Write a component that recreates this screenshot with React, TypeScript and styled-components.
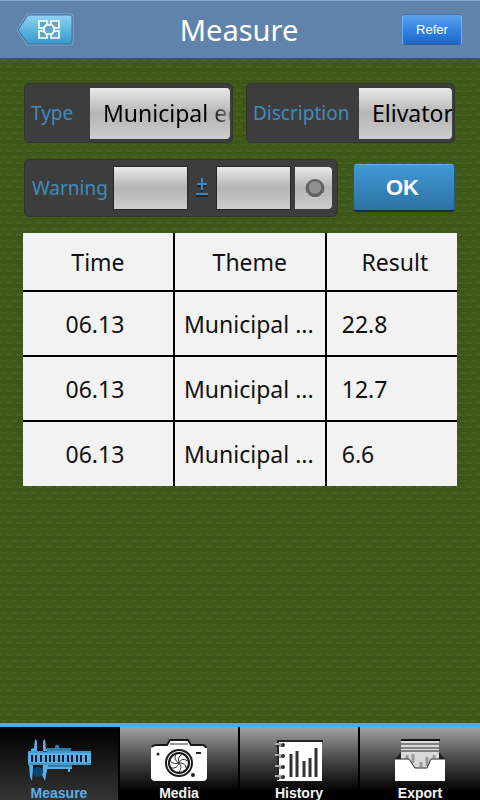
import React from "react";
import styled, { createGlobalStyle } from "styled-components";

const tile = encodeURIComponent(
  `<svg xmlns="http://www.w3.org/2000/svg" width="10" height="12"><rect width="10" height="12" fill="#3d5819"/><path d="M1 1h6M0 7h2M6 7h4" stroke="#4b6a21"/><path d="M2 3h5M0 9h2M7 9h3" stroke="#38501a"/></svg>`
);

const GlobalStyle = createGlobalStyle`
  * { box-sizing: border-box; }
  body { margin: 0; font-family: "Noto Sans", "Open Sans", sans-serif; }
  button, input, select { font: inherit; margin: 0; }
`;

const silver = "linear-gradient(#e9e9e9, #b7b7b7 48%, #bababa 62%, #cecece)";

const Screen = styled.div`
  display: flex;
  flex-direction: column;
  min-height: 100vh;
  background: #3d5819 url("data:image/svg+xml,${tile}");
`;

const Header = styled.header`
  display: grid;
  grid-template-columns: 1fr auto 1fr;
  align-items: center;
  height: 60px;
  padding: 0 18px 0 16px;
  background: #6083ab;
  border-top: 1px solid #83a7cf;
  border-bottom: 2px solid #3b5175;
`;

const Title = styled.h1`
  margin: 0;
  color: #fff;
  font-size: 29px;
  line-height: 40px;
  font-weight: 400;
`;

const BackButton = styled.button`
  justify-self: start;
  padding: 0;
  border: 0;
  background: none;
  svg { display: block; }
`;

const ReferButton = styled.button`
  justify-self: end;
  width: 60px;
  height: 31px;
  padding: 0;
  border: 1px solid #6bb0f5;
  border-top-color: #3d71ad;
  border-bottom-color: #2f5e9c;
  border-radius: 4px;
  background: linear-gradient(#5ba2ec, #3385e2 50%, #1c66c8);
  color: #fff;
  font-family: "Liberation Sans", Arial, sans-serif;
  font-size: 13px;
`;

const Main = styled.main`
  flex: 1;
  padding: 23px 23px 0;
`;

const FormRow = styled.div<{ $gap: number }>`
  display: flex;
  align-items: center;
  gap: ${(p) => p.$gap}px;
  margin: 0 2px 16px 1px;
`;

const Field = styled.div<{ $grow?: boolean }>`
  display: flex;
  align-items: center;
  flex: ${(p) => (p.$grow ? "1 1 0" : "0 1 auto")};
  min-width: 0;
  height: 60px;
  padding: 0 2px 0 6px;
  border: 1px solid #30372a;
  border-radius: 5px;
  background: #3d3d3d;
`;

const FieldLabel = styled.label<{ $width: number }>`
  flex: none;
  width: ${(p) => p.$width}px;
  color: #418bbd;
  font-size: 19px;
  line-height: 28px;
  white-space: nowrap;
`;

const Picker = styled.select<{ $fade?: boolean }>`
  appearance: none;
  flex: 1;
  min-width: 0;
  height: 51px;
  padding: 0 0 0 13px;
  border: 0;
  border-radius: 0 4px 4px 0;
  color: ${(p) => (p.$fade ? "transparent" : "#000")};
  background: ${(p) =>
    p.$fade ? `linear-gradient(90deg, #000 86%, #0004) text, ${silver}` : silver};
  font-size: 23px;
  line-height: 32px;
  text-overflow: clip;
`;

const WarningField = styled(Field)`
  flex: 1;
  height: 58px;
  padding: 0 5px 0 7px;
`;

const LimitInput = styled.input`
  width: 75px;
  min-width: 0;
  height: 44px;
  padding: 0 8px;
  border: 1px solid #262626;
  border-radius: 0;
  background: ${silver};
  font-size: 20px;
`;

const Sign = styled.span`
  flex: 1;
  display: flex;
  justify-content: center;
`;

const ToggleButton = styled.button`
  display: flex;
  align-items: center;
  justify-content: center;
  width: 37px;
  height: 42px;
  margin-left: 4px;
  padding: 0 0 0 2px;
  border: 0;
  border-radius: 0 4px 4px 0;
  background: ${silver};
`;

const OkButton = styled.button`
  width: 102px;
  height: 48px;
  padding: 0 3px 0 0;
  border: 1px solid #255b84;
  border-top-color: #62abdc;
  border-bottom: 2px solid #172d3d;
  border-radius: 4px;
  background: linear-gradient(#4099d4, #2d72a4);
  color: #fff;
  font-family: "Liberation Sans", Arial, sans-serif;
  font-size: 22px;
  font-weight: 700;
`;

const Results = styled.table`
  width: 100%;
  table-layout: fixed;
  border-collapse: separate;
  border-spacing: 0;
  background: #f2f2f2;
  color: #111;
  font-size: 23px;
  line-height: 32px;
`;

const HeadCell = styled.th`
  height: 59px;
  padding: 0 0 0 6px;
  border-right: 2px solid #000;
  border-bottom: 2px solid #000;
  font-weight: 400;
  &:nth-child(-n + 2) { width: 35%; padding: 0; }
  &:last-child { border-right: 0; }
`;

const Cell = styled.td<{ $align?: "center" | "left" }>`
  height: 65px;
  padding: 0 10px 0 ${(p) => (p.$align === "left" ? 15 : 8)}px;
  border-right: 2px solid #000;
  border-bottom: 2px solid #000;
  text-align: ${(p) => p.$align ?? "center"};
  overflow: hidden;
  white-space: nowrap;
  &:first-child { padding-right: 14px; }
  &:last-child { border-right: 0; }
  tr:last-child & { height: 64px; border-bottom: 0; }
`;

const TabBar = styled.nav`
  display: grid;
  grid-template-columns: repeat(4, 1fr);
  height: 77px;
  overflow: hidden;
  border-top: 4px solid #51a9df;
  background: #000;
`;

const Tab = styled.a<{ $active?: boolean }>`
  display: flex;
  flex-direction: column;
  align-items: center;
  padding-top: 8px;
  border-right: 2px solid #000;
  background: ${(p) =>
    p.$active ? "linear-gradient(#000, #343434)" : "linear-gradient(#a2a2a2, #4c4c4c 42%, #000 88%)"};
  color: ${(p) => (p.$active ? "#58b0ea" : "#f3f3f3")};
  font-family: "Liberation Sans", Arial, sans-serif;
  font-size: 14px;
  line-height: 14px;
  font-weight: 700;
  text-decoration: none;
  &:last-child { border-right: 0; }
  svg { display: block; flex: none; margin-bottom: 1px; }
`;

const BackIcon = () => (
  <svg width="58" height="34" viewBox="0 0 58 34" aria-hidden="true">
    <defs>
      <linearGradient id="back" x2="0" y2="1">
        <stop stopColor="#91d2f2" />
        <stop offset=".5" stopColor="#5eb7e2" />
        <stop offset="1" stopColor="#3797ca" />
      </linearGradient>
    </defs>
    <path d="M11 1H54Q57 1 57 4V29Q57 32 54 32H11L1 17Z" fill="none" stroke="#83a9cf" />
    <path d="M12 2H54Q56 2 56 4V29Q56 31 54 31H12L2 17Z" fill="url(#back)" stroke="#41709e" />
    <g fill="#5fa6c7" stroke="#fff" strokeWidth="1.7">
      <path d="M23 8H31V12L27 15H23ZM35 8H43V15H39L35 12ZM23 18H27L31 21V25H23ZM43 18H39L35 21V25H43Z" />
      <path d="M30 12H36L38 15V18L36 21H30L28 18V15Z" />
    </g>
  </svg>
);

const PlusMinusIcon = () => (
  <svg width="14" height="22" viewBox="0 0 14 22" aria-hidden="true">
    <path d="M2 9H12M7 3V15M1 19H13" fill="none" stroke="#20242a" strokeWidth="2" />
    <path d="M2 7H12M7 1V13M1 17H13" fill="none" stroke="#3988c1" strokeWidth="2" />
  </svg>
);

const KnobIcon = () => (
  <svg width="20" height="21" viewBox="0 0 20 21" aria-hidden="true">
    <circle cx="10" cy="10.500" r="9.500" fill="#666" />
    <path d="M2 15a9 9 0 0 0 16 0" fill="none" stroke="#dedede" />
    <circle cx="10" cy="9.500" r="7" fill="#8f8f8f" stroke="#545454" />
  </svg>
);

const CaliperIcon = () => (
  <svg width="64" height="50" viewBox="0 0 64 50" aria-hidden="true">
    <path d="M20 13H28V11L29 10H31L32 11V13H44V17H20ZM20 29H45V33H20Z" fill="#347da9" />
    <g fill="#58b0ea">
      <path d="M8 4L10 6V17H4V14L7 13ZM18 4L16 6V17H20V14H19ZM1 16H64V30H1Z" />
      <path d="M2 29H6V34L5 46L3 42ZM16 30H21L18 46L15 40ZM20 32H45V34H43V37H41V34H20Z" />
    </g>
    <path d="M1 17H64M1 29H64" stroke="#347da9" />
    <path d="M5 20V27M9 20V27M14 20V27M19 20V27M23 20V27M27 20V27M32 20V27M36 20V27M41 20V27M45 20V27M50 20V27M54 20V27M59 20V27" stroke="#071a2c" strokeWidth="2" />
    <circle cx="11" cy="37" r="5" fill="#0c486d" />
  </svg>
);

const CameraIcon = () => (
  <svg width="58" height="50" viewBox="0 0 58 50" aria-hidden="true">
    <path d="M5 11H17L20 5H38L41 11H53Q57 11 57 15V42Q57 46 53 46H5Q1 46 1 42V15Q1 11 5 11Z" fill="#fff" />
    <path d="M2 12Q3 10 7 10H17L20 5H38L41 10H53Q56 11 56 13" fill="none" stroke="#181818" strokeWidth="2" />
    <path d="M20 9H38" stroke="#333" />
    <circle cx="29" cy="28" r="13" fill="#fff" stroke="#1b1b1b" strokeWidth="2" />
    <circle cx="29" cy="28" r="10" fill="#fff" stroke="#111" strokeWidth="2" />
    <path d="M29 28Q23 25 26 19M29 28Q27 21 33 19M29 28Q31 22 38 26M29 28Q36 28 36 33M29 28Q33 32 29 37M29 28Q27 34 21 33M29 28Q22 30 20 25" fill="none" stroke="#333" />
    <circle cx="8" cy="19" r="1.500" fill="#222" />
    <circle cx="43" cy="40" r="2" fill="#222" />
    <path d="M46 17H51V19H46Z" fill="#222" />
  </svg>
);

const HistoryIcon = () => (
  <svg width="50" height="50" viewBox="0 0 50 50" aria-hidden="true">
    <path d="M3 5H48V46H3Z" fill="#fff" />
    <path d="M3 6H49M4 5V45" fill="none" stroke="#252525" strokeWidth="2" />
    <path d="M17 19V42M23 16V42M30 26V42M36 23V42M42 13V42" stroke="#333" strokeWidth="3" />
    <g fill="#303030">
      <circle cx="9" cy="10" r="2" /><circle cx="9" cy="21" r="2" />
      <circle cx="9" cy="32" r="2" /><circle cx="9" cy="42" r="2" />
    </g>
    <path d="M1 9H7M1 20H7M1 31H7M1 41H7" stroke="#aaa" strokeWidth="2" />
    <path d="M1 11H9M1 22H9M1 33H9M1 43H9" stroke="#333" />
  </svg>
);

const ExportIcon = () => (
  <svg width="52" height="50" viewBox="0 0 52 50" aria-hidden="true">
    <path d="M1 24L7 17V24ZM51 24L45 17V24Z" fill="#222" />
    <path d="M7 5H45V34H7Z" fill="#d9d9d9" />
    <path d="M7 5H46" stroke="#111" strokeWidth="2" />
    <path d="M7 9H45M7 13H45M7 16H45" stroke="#292929" />
    <path d="M19 19V28M27 27V32M33 22V31M13 20V24M40 20V23" stroke="#999" strokeWidth="3" />
    <path d="M1 24H15L21 33H33L37 24H51V46H1Z" fill="#fff" />
    <path d="M1 24H15L21 33H33L37 24H51" fill="none" stroke="#222" />
  </svg>
);

const rows = [
  { time: "06.13", theme: "Municipal ...", result: "22.8" },
  { time: "06.13", theme: "Municipal ...", result: "12.7" },
  { time: "06.13", theme: "Municipal ...", result: "6.6" },
];

const tabs = [
  { name: "Measure", Icon: CaliperIcon },
  { name: "Media", Icon: CameraIcon },
  { name: "History", Icon: HistoryIcon },
  { name: "Export", Icon: ExportIcon },
];

export default function App() {
  return (
    <Screen>
      <GlobalStyle />
      <Header>
        <BackButton type="button" aria-label="Back"><BackIcon /></BackButton>
        <Title>Measure</Title>
        <ReferButton type="button">Refer</ReferButton>
      </Header>
      <Main>
        <FormRow $gap={13}>
          <Field $grow>
            <FieldLabel htmlFor="type" $width={59}>Type</FieldLabel>
            <Picker id="type" $fade><option>Municipal ec</option></Picker>
          </Field>
          <Field $grow>
            <FieldLabel htmlFor="description" $width={106}>Discription</FieldLabel>
            <Picker id="description"><option>Elivator</option></Picker>
          </Field>
        </FormRow>
        <FormRow $gap={15}>
          <WarningField>
            <FieldLabel htmlFor="warning" $width={81}>Warning</FieldLabel>
            <LimitInput id="warning" />
            <Sign><PlusMinusIcon /></Sign>
            <LimitInput aria-label="Tolerance" />
            <ToggleButton type="button" aria-label="Toggle warning"><KnobIcon /></ToggleButton>
          </WarningField>
          <OkButton type="button">OK</OkButton>
        </FormRow>
        <Results>
          <thead>
            <tr><HeadCell>Time</HeadCell><HeadCell>Theme</HeadCell><HeadCell>Result</HeadCell></tr>
          </thead>
          <tbody>
            {rows.map((row, i) => (
              <tr key={i}>
                <Cell>{row.time}</Cell>
                <Cell>{row.theme}</Cell>
                <Cell $align="left">{row.result}</Cell>
              </tr>
            ))}
          </tbody>
        </Results>
      </Main>
      <TabBar>
        {tabs.map(({ name, Icon }, i) => (
          <Tab key={name} href={`#${name.toLowerCase()}`} $active={i === 0}>
            <Icon />
            {name}
          </Tab>
        ))}
      </TabBar>
    </Screen>
  );
}
